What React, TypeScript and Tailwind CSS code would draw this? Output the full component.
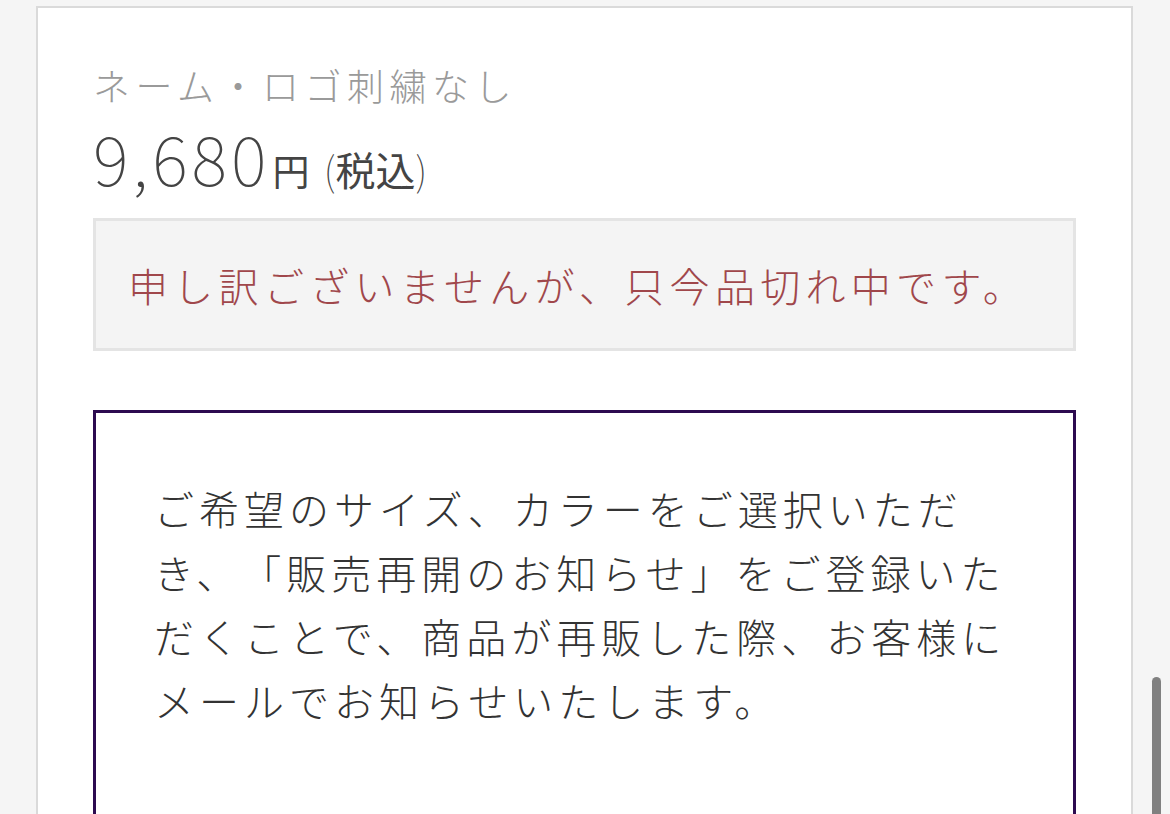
const jp = '[font-family:"Noto_Sans_CJK_JP","Noto_Sans",sans-serif] [text-spacing-trim:space-all]';

export default function App() {
  return (
    <div className={`relative h-[814px] overflow-hidden bg-[#f5f5f5] pl-[36px] pt-[6px] ${jp}`}>
      <div className="h-[900px] w-[1097px] border-2 border-[#dadada] bg-white px-[55px] pt-[50px]">
        {/* product variant + price */}
        <p className="text-[37px] font-light leading-[54px] tracking-[5.5px] text-[#9a9a9a]">
          ネーム・ロゴ刺繍なし
        </p>
        <p className="mt-[5px] flex items-baseline leading-[80px] text-[#444]">
          <span className="text-[68px] font-thin tracking-[4px]">9,680</span>
          <span className="ml-[2px] text-[37px] font-normal">円</span>
          <span className="ml-[14px] text-[40px] font-normal">
            <span className="font-thin">(</span>税込<span className="font-thin">)</span>
          </span>
        </p>

        {/* sold out */}
        <div className="mt-[8px] flex h-[133px] items-center border-[3px] border-[#e4e4e4] bg-[#f4f4f4] pl-[32px]">
          <p className="text-[40px] font-light tracking-[5.3px] text-[#a0474b]">
            申し訳ございませんが、只今品切れ中です。
          </p>
        </div>

        {/* restock notice */}
        <div className="mt-[59px] h-[500px] border-[3px] border-[#2d0b50] px-[58px] pt-[63px]">
          <p className="text-[40px] font-light leading-[64px] tracking-[5px] text-[#333]">
            ご希望のサイズ、カラーをご選択いただ<br />
            き、「販売再開のお知らせ」をご登録いた<br />
            だくことで、商品が再販した際、お客様に<br />
            メールでお知らせいたします。
          </p>
        </div>
      </div>

      {/* overlay scrollbar */}
      <div className="absolute left-[1152px] top-[677px] h-[160px] w-[9px] rounded-full bg-[#808080]" />
    </div>
  );
}
